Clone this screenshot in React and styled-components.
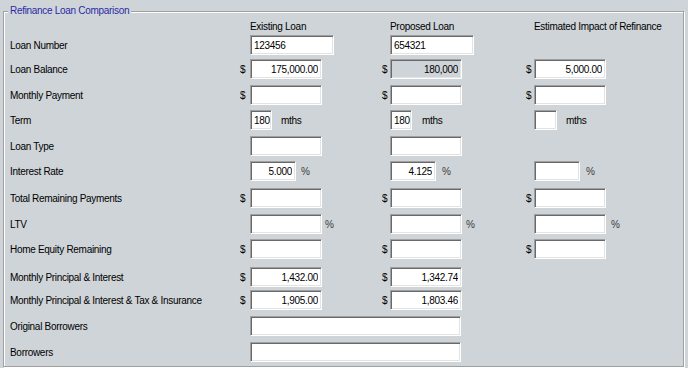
import styled, { createGlobalStyle } from "styled-components"

const Global = createGlobalStyle`
  html, body { margin: 0; padding: 0; background: #cfd4d8; }
  body {
    font-family: "Liberation Sans", Arial, sans-serif;
    font-size: 10px;
    letter-spacing: -0.3px;
    color: #000;
  }
`

const COLS = "228px 12px 130px 10px 134px 10px 1fr"

const Page = styled.div`
  width: 688px;
  height: 368px;
  box-sizing: border-box;
  padding: 11px 4px 0 3px;
  background: #cfd4d8;
`

const Group = styled.div`
  position: relative;
  height: 356px;
  box-sizing: border-box;
  border: 1px solid #a0a0a0;
  box-shadow: inset 1px 1px 0 #fff, 1px 1px 0 #fff;
  padding: 8px 0 0 6px;
`

const Legend = styled.span`
  position: absolute;
  top: -7px;
  left: 4px;
  padding: 0 2px;
  line-height: 12px;
  background: #cfd4d8;
  color: #2a2aa6;
`

const Row = styled.div`
  display: grid;
  grid-template-columns: ${COLS};
  align-items: center;
  height: ${p => p.$h || 20}px;
  margin-top: ${p => p.$gap || 0}px;
`

const Head = styled.div`
  grid-column: ${p => p.$col};
  white-space: nowrap;
`

const Label = styled.div`
  grid-column: 1;
  white-space: nowrap;
`

const Dollar = styled.div`
  grid-column: ${p => p.$col};
  padding-left: 2px;
`

const Field = styled.div`
  grid-column: ${p => p.$col};
  display: flex;
  align-items: center;
`

const Box = styled.input`
  width: ${p => p.$w}px;
  height: 20px;
  box-sizing: border-box;
  margin: 0;
  padding: ${p => p.$pad || "0 3px"};
  font: inherit;
  letter-spacing: inherit;
  color: #000;
  text-align: ${p => p.$align || "right"};
  background: ${p => (p.$off ? "#cfd4d8" : "#fff")};
  border-style: solid;
  border-width: 1px;
  border-color: #a0a0a0 #fff #fff #a0a0a0;
  box-shadow: inset 1px 1px 0 #696969, inset -1px -1px 0 #e3e3e3;
  outline: none;
`

const Suffix = styled.span`
  margin-left: ${p => p.$gap}px;
  color: ${p => p.$dim ? "#3a3a3a" : "#000"};
  white-space: nowrap;
`

function Money({ col, value = "", off }) {
  return (<>
    <Dollar $col={col}>$</Dollar>
    <Field $col={col + 1}><Box $w={72} readOnly value={value} $off={off} /></Field>
  </>)
}

export default function App() {
  return (<>
    <Global />
    <Page>
      <Group>
        <Legend>Refinance Loan Comparison</Legend>

        <Row $h={13}>
          <Head $col={3}>Existing Loan</Head>
          <Head $col={5}>Proposed Loan</Head>
          <Head $col={7}>Estimated Impact of Refinance</Head>
        </Row>

        <Row $gap={2}>
          <Label>Loan Number</Label>
          <Field $col={3}><Box $w={84} $align="left" readOnly value="123456" /></Field>
          <Field $col={5}><Box $w={84} $align="left" readOnly value="654321" /></Field>
        </Row>

        <Row $gap={4}>
          <Label>Loan Balance</Label>
          <Money col={2} value="175,000.00" />
          <Money col={4} value="180,000" off />
          <Money col={6} value="5,000.00" />
        </Row>

        <Row $gap={6}>
          <Label>Monthly Payment</Label>
          <Money col={2} />
          <Money col={4} />
          <Money col={6} />
        </Row>

        <Row $gap={5}>
          <Label>Term</Label>
          <Field $col={3}><Box $w={22} $pad="0 0 0 3px" $align="left" readOnly value="180" /><Suffix $gap={9}>mths</Suffix></Field>
          <Field $col={5}><Box $w={22} $pad="0 0 0 3px" $align="left" readOnly value="180" /><Suffix $gap={10}>mths</Suffix></Field>
          <Field $col={7}><Box $w={23} readOnly value="" /><Suffix $gap={9}>mths</Suffix></Field>
        </Row>

        <Row $gap={6}>
          <Label>Loan Type</Label>
          <Field $col={3}><Box $w={72} readOnly value="" /></Field>
          <Field $col={5}><Box $w={72} readOnly value="" /></Field>
        </Row>

        <Row $gap={5}>
          <Label>Interest Rate</Label>
          <Field $col={3}><Box $w={46} readOnly value="5.000" /><Suffix $gap={5} $dim>%</Suffix></Field>
          <Field $col={5}><Box $w={46} readOnly value="4.125" /><Suffix $gap={6} $dim>%</Suffix></Field>
          <Field $col={7}><Box $w={46} readOnly value="" /><Suffix $gap={6} $dim>%</Suffix></Field>
        </Row>

        <Row $gap={7}>
          <Label>Total Remaining Payments</Label>
          <Money col={2} />
          <Money col={4} />
          <Money col={6} />
        </Row>

        <Row $gap={6}>
          <Label>LTV</Label>
          <Field $col={3}><Box $w={72} readOnly value="" /><Suffix $gap={3} $dim>%</Suffix></Field>
          <Field $col={5}><Box $w={72} readOnly value="" /><Suffix $gap={4} $dim>%</Suffix></Field>
          <Field $col={7}><Box $w={72} readOnly value="" /><Suffix $gap={5} $dim>%</Suffix></Field>
        </Row>

        <Row $gap={5}>
          <Label>Home Equity Remaining</Label>
          <Money col={2} />
          <Money col={4} />
          <Money col={6} />
        </Row>

        <Row $gap={8}>
          <Label>Monthly Principal &amp; Interest</Label>
          <Money col={2} value="1,432.00" />
          <Money col={4} value="1,342.74" />
        </Row>

        <Row $gap={3}>
          <Label>Monthly Principal &amp; Interest &amp; Tax &amp; Insurance</Label>
          <Money col={2} value="1,905.00" />
          <Money col={4} value="1,803.46" />
        </Row>

        <Row $gap={6}>
          <Label>Original Borrowers</Label>
          <Field $col="3 / span 3"><Box $w={211} $align="left" readOnly value="" /></Field>
        </Row>

        <Row $gap={6}>
          <Label>Borrowers</Label>
          <Field $col="3 / span 3"><Box $w={211} $align="left" readOnly value="" /></Field>
        </Row>
      </Group>
    </Page>
  </>)
}
